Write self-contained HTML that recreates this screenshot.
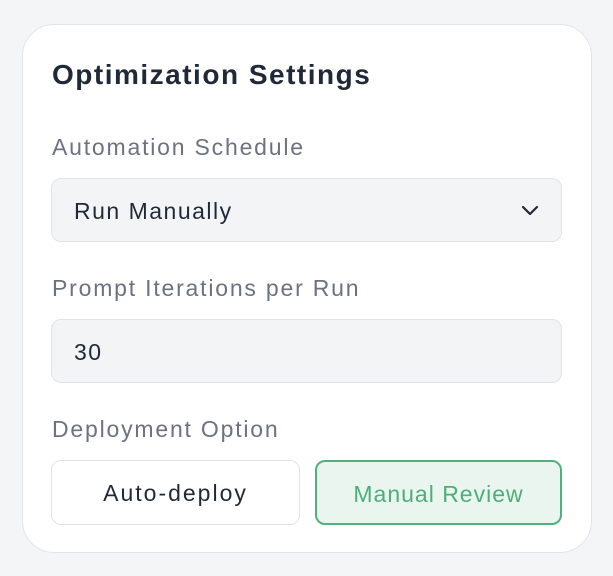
<!DOCTYPE html>
<html><head><style>
body{margin:0;width:613px;height:576px;background:#f4f5f7;font-family:"Liberation Sans",sans-serif;position:relative;overflow:hidden}
.card{position:absolute;left:22px;top:24px;width:570px;height:529px;background:#fff;border:1.5px solid #e1e5ea;border-radius:32px;box-sizing:border-box}
.t{position:absolute;left:52px;top:59px;font-size:28px;font-weight:bold;color:#1f2937;letter-spacing:1.5px}
.l{position:absolute;left:52px;font-size:23px;color:#6b7280;letter-spacing:1.8px}
.f{position:absolute;left:51px;width:511px;height:64px;background:#f3f4f6;border:1.5px solid #e0e3e8;border-radius:10px;box-sizing:border-box;font-size:23px;color:#1f2937;line-height:64px;padding-left:22px;letter-spacing:1.5px}
.b{position:absolute;top:460px;height:65px;border-radius:10px;box-sizing:border-box;font-size:23px;text-align:center;line-height:65px}
</style></head><body>
<div class="card"></div>
<div class="t">Optimization Settings</div>
<div class="l" style="top:134px">Automation Schedule</div>
<div class="f" style="top:178px">Run Manually
<svg style="position:absolute;right:22px;top:26px" width="18" height="12" viewBox="0 0 18 12"><path d="M2 2l7 7 7-7" fill="none" stroke="#1f2937" stroke-width="2.2" stroke-linecap="round" stroke-linejoin="round"/></svg></div>
<div class="l" style="top:275px">Prompt Iterations per Run</div>
<div class="f" style="top:319px">30</div>
<div class="l" style="top:416px">Deployment Option</div>
<div class="b" style="left:51px;width:249px;border:1.5px solid #dfe3e8;background:#fff;color:#1f2937;letter-spacing:2px">Auto-deploy</div>
<div class="b" style="left:315px;width:247px;border:2px solid #4fb27c;background:#ebf5ef;color:#4caf78;letter-spacing:1px">Manual Review</div>
</body></html>
